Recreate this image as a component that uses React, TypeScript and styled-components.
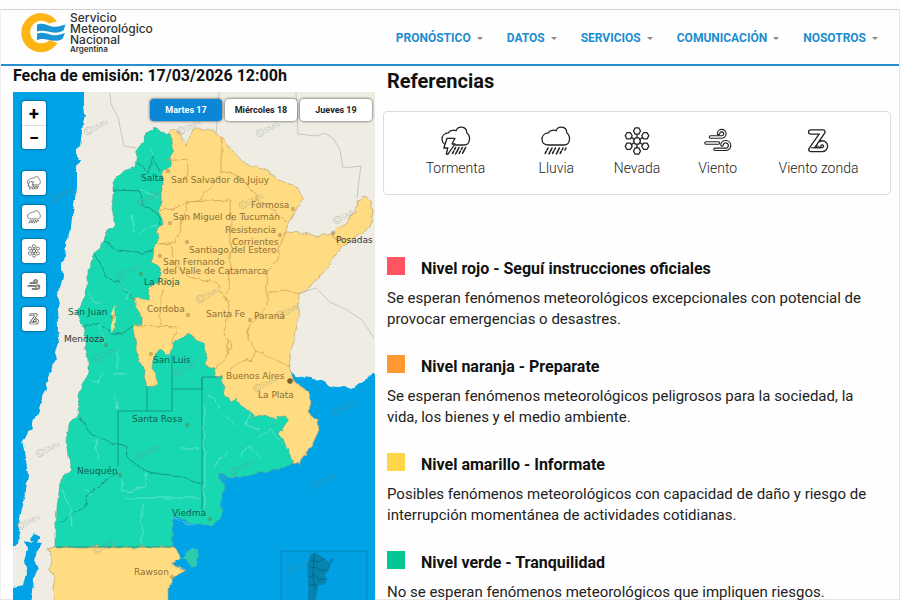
import React from "react";
import styled, { createGlobalStyle, css } from "styled-components";

const GlobalStyle = createGlobalStyle`
  *, *::before, *::after { box-sizing: border-box; }
  body {
    margin: 0;
    background: #fdfdfd;
    color: #111;
    font-family: Roboto, "Liberation Sans", sans-serif;
  }
  h1, h2, h3, p, ul { margin: 0; padding: 0; }
  ul { list-style: none; }
  button { font: inherit; cursor: pointer; }
`;

const Page = styled.div`
  display: flex;
  flex-direction: column;
  height: 100vh;
  overflow: hidden;
  padding-top: 9px;
`;

const Shell = styled.div`
  flex: 1;
  min-height: 0;
  border: 1px solid #e6e6e6;
  border-top-color: #d2d2d2;
  border-left-color: #f0f0f0;
  background: #fefefe;
`;

const Header = styled.header`
  display: flex;
  justify-content: space-between;
  align-items: center;
  height: 56px;
  padding: 0 21px 0 19px;
  border-bottom: 2px solid #2590d2;
`;

const Brand = styled.a`
  display: flex;
  gap: 3px;
  align-self: flex-start;
  padding-top: 2px;
  color: #333;
  text-decoration: none;
`;

const BrandName = styled.span`
  display: flex;
  flex-direction: column;
  font: 500 12px/11px Inter, "Liberation Sans", sans-serif;
`;

const BrandCountry = styled.span`
  font-size: 8px;
  line-height: 9px;
  font-weight: 600;
`;

const Nav = styled.nav`
  display: flex;
  gap: 24px;
`;

const NavButton = styled.button`
  display: flex;
  align-items: center;
  gap: 6px;
  padding: 2px 0 0;
  border: 0;
  background: none;
  color: #1b8dcf;
  font-size: 12px;
  font-weight: 700;
  line-height: 18px;
`;

const Caret = styled.span`
  border: 3px solid transparent;
  border-top-color: #888;
  border-bottom: 0;
`;

const Main = styled.main`
  display: grid;
  grid-template-columns: 362fr 508fr;
  gap: 8px;
  padding: 0 8px 0 12px;
`;

const Issued = styled.h1`
  height: 26px;
  font-size: 16px;
  font-weight: 700;
  line-height: 20px;
`;

const MapFrame = styled.div`
  position: relative;
`;

const MapSvg = styled.svg`
  display: block;
  width: 100%;
  height: auto;
`;

const CityText = styled.text<{ $tone: keyof typeof cityTones }>`
  font: 9px "DejaVu Sans", sans-serif;
  fill: ${(p) => cityTones[p.$tone]};
`;

const WatermarkText = styled.text`
  font: 8px "Liberation Sans", sans-serif;
`;

const MapTools = styled.div`
  position: absolute;
  top: 9px;
  left: 9px;
  display: flex;
  flex-direction: column;
  gap: 22px;
`;

const ZoomGroup = styled.div`
  display: flex;
  flex-direction: column;
  border-radius: 3px;
  background: #fff;
  box-shadow: 0 0 2px 1px rgba(0, 40, 80, 0.4);
`;

const ZoomButton = styled.button`
  width: 24px;
  height: 24px;
  padding: 0;
  border: 0;
  border-top: 1px solid #ddd;
  background: none;
  color: #000;
  font-size: 18px;
  font-weight: 700;
  line-height: 22px;
  &:first-child { border-top-color: transparent; }
`;

const LayerList = styled.div`
  display: flex;
  flex-direction: column;
  gap: 10px;
`;

const LayerButton = styled.button`
  display: grid;
  place-items: center;
  width: 24px;
  height: 24px;
  padding: 0;
  border: 0;
  border-radius: 3px;
  background: #fff;
  box-shadow: 0 0 2px 1px rgba(0, 40, 80, 0.4);
  color: #333;
`;

const DayTabs = styled.div`
  position: absolute;
  top: 7px;
  right: 3px;
  display: flex;
  gap: 3px;
`;

const DayTab = styled.button<{ $active?: boolean }>`
  width: 72px;
  height: 22px;
  padding: 0;
  border: 0;
  border-radius: 4px;
  background: #fff;
  box-shadow: 0 0 2px 1px rgba(60, 60, 60, 0.5);
  color: #222;
  font-size: 9px;
  font-weight: 700;
  line-height: 22px;
  ${(p) => p.$active && css`
    background: #0b87d8;
    color: #fff;
  `}
`;

const Title = styled.h2`
  padding-left: 4px;
  margin-bottom: 15px;
  font-size: 20px;
  font-weight: 700;
  line-height: 30px;
`;

const PhenomenaCard = styled.ul`
  display: grid;
  grid-template-columns: 3fr 2fr 2fr 2fr 3fr;
  height: 84px;
  padding: 14px 11px;
  border: 1px solid #dcdcdc;
  border-radius: 4px;
  background: #fff;
`;

const Phenomenon = styled.li`
  display: flex;
  flex-direction: column;
  align-items: center;
  gap: 2px;
  color: #222;
  font-size: 14px;
  font-weight: 300;
  line-height: 20px;
`;

const Levels = styled.ul`
  display: flex;
  flex-direction: column;
  gap: 25px;
  padding: 62px 20px 0 4px;
`;

const LevelHead = styled.div`
  display: flex;
  gap: 16px;
  height: 31px;
`;

const Swatch = styled.span<{ $color: string }>`
  width: 18px;
  height: 18px;
  background: ${(p) => p.$color};
`;

const LevelTitle = styled.h3`
  font-size: 16px;
  font-weight: 700;
  line-height: 24px;
`;

const LevelText = styled.p`
  color: #222;
  font-size: 15px;
  line-height: 21px;
`;

const cityTones = {
  amber: "#8f7032",
  green: "#12604f",
  dark: "#333",
};

type IconProps = { size: number };

const Glyph = ({ size, children }: IconProps & { children: React.ReactNode }) => (
  <svg width={size} height={size} viewBox="0 0 30 30" fill="none" stroke="currentColor"
    strokeWidth="1.3" strokeLinecap="round" strokeLinejoin="round" aria-hidden="true">
    {children}
  </svg>
);

const StormIcon = ({ size }: IconProps) => (
  <Glyph size={size}>
    <path d="M3.4 18C1.8 16.8 1 15.2 1 13.2C1 9.4 4 7 7.5 6.8C8.3 5 10 4.2 12 4.3C13.2 3.9 14 4.2 15 4.8C16 2.4 18 1 20.5 1.2C24 1.5 25.8 4 25.8 7C28 8.5 28.7 11 28.5 13.5C28.2 17 26 19 23 19H14.5" />
    <path d="M6 12.3H14L11 18H14L6.8 28.3L5.3 28L6.8 22H2.8Z" />
    <path d="M14.6 21.5L13.6 23.4M12.8 25L11.6 27.4M18 21.5L14.6 28M21.4 21.5L20.4 23.4M19.4 25L18.2 27.4M24.6 21.5L21.6 27.2" strokeWidth="1.6" />
  </Glyph>
);

const RainIcon = ({ size }: IconProps) => (
  <Glyph size={size}>
    <path d="M7.5 19C3.5 19 1 16.8 1 13.2C1 9.4 4 7 7.5 6.8C8.3 5 10 4.2 12 4.3C13.2 3.9 14 4.2 15 4.8C16 2.4 18 1 20.5 1.2C24 1.5 25.8 4 25.8 7C28 8.5 28.7 11 28.5 13.5C28.2 17 26 19 23 19Z" />
    <path d="M7 22L6 24M5.2 25.4L4.2 27.4M11 22L8 27.8M14.4 22L13.4 24M12.6 25.4L11.6 27.4M18.4 22L15.4 27.8M22 22L21 24M20.2 25.4L19.2 27.4M25 22L24 24" strokeWidth="1.6" />
  </Glyph>
);

const snowCells = [[15, 15], [15, 5], [15, 25], [6.7, 9.8], [23.3, 9.8], [6.7, 20.2], [23.3, 20.2]];

const SnowIcon = ({ size }: IconProps) => (
  <Glyph size={size}>
    <path d="M15 8.4V11.6M15 18.4V21.6M9.7 11.6L12 13.2M20.3 11.6L18 13.2M9.7 18.4L12 16.8M20.3 18.4L18 16.8" />
    {snowCells.map(([x, y]) => (
      <path key={`${x}-${y}`} d={`M${x - 1.8} ${y - 3.1}h3.6l1.7 3.1l-1.7 3.1h-3.6l-1.7-3.1z`} />
    ))}
  </Glyph>
);

const windTubes = "M7.5 11H18.5a3.2 3.2 0 1 0-3-3.6M3 17H15.5M12 23.3H22.6a3.8 3.8 0 1 0-3.6-4.4";

const WindIcon = ({ size }: IconProps) => (
  <Glyph size={size}>
    <path d={windTubes} strokeWidth="3.6" />
    <path d={windTubes} stroke="#fff" strokeWidth="1.3" />
  </Glyph>
);

const zondaTube = "M7.6 6H20L7.8 23.6H19.2a3.4 3.4 0 1 0-3.4-3.2";

const ZondaIcon = ({ size }: IconProps) => (
  <Glyph size={size}>
    <path d={zondaTube} strokeWidth="5.4" />
    <path d={zondaTube} stroke="#fff" strokeWidth="2.8" />
    <path d="M15.8 20.4a1.6 1.6 0 0 0 1.6 1.4H8.4" strokeWidth="1.1" />
  </Glyph>
);

const LogoMark = () => (
  <svg width="47" height="42" viewBox="0 0 47 42" aria-hidden="true">
    <path d="M37 9.5A19.6 19.6 0 1 0 37.5 31L29.5 28A11.3 11.3 0 1 1 29 11.5Z" fill="#fdb515" />
    <path d="M17 12.5C23 10.5 27 13.5 32 14.5C37 15.2 41 14 45.5 12.5L43.5 18.5C38 21.5 33 21 28 19.5C23 18.2 20 18.5 17 19.5Z" fill="#1a94d2" />
    <path d="M17 21.5C23 19.5 27 22 32 23C37 23.7 41 22.5 45 21L42.5 27C38 29.5 33 29 28 27.8C23 26.6 20 27 17 28.2Z" fill="#1a94d2" />
  </svg>
);

const phenomena = [
  { name: "Tormenta", Icon: StormIcon },
  { name: "Lluvia", Icon: RainIcon },
  { name: "Nevada", Icon: SnowIcon },
  { name: "Viento", Icon: WindIcon },
  { name: "Viento zonda", Icon: ZondaIcon },
];

const levels = [
  { color: "#ff5563", title: "Nivel rojo - Seguí instrucciones oficiales", text: "Se esperan fenómenos meteorológicos excepcionales con potencial de provocar emergencias o desastres." },
  { color: "#ff9833", title: "Nivel naranja - Preparate", text: "Se esperan fenómenos meteorológicos peligrosos para la sociedad, la vida, los bienes y el medio ambiente." },
  { color: "#ffd54a", title: "Nivel amarillo - Informate", text: "Posibles fenómenos meteorológicos con capacidad de daño y riesgo de interrupción momentánea de actividades cotidianas." },
  { color: "#03c694", title: "Nivel verde - Tranquilidad", text: "No se esperan fenómenos meteorológicos que impliquen riesgos." },
];

type City = [string, number, number, keyof typeof cityTones];

const cities: City[] = [
  ["Salta", 141, 181, "green"],
  ["San Salvador de Jujuy", 171, 183, "amber"],
  ["Formosa", 251, 208, "amber"],
  ["San Miguel de Tucumán", 173, 220, "amber"],
  ["Resistencia", 225, 233, "amber"],
  ["Corrientes", 232, 245, "amber"],
  ["Santiago del Estero", 189, 253, "amber"],
  ["Posadas", 336, 243, "dark"],
  ["San Fernando", 163, 265, "amber"],
  ["del Valle de Catamarca", 163, 274, "amber"],
  ["La Rioja", 144, 285, "green"],
  ["Cordoba", 147, 312, "amber"],
  ["San Juan", 68, 315, "green"],
  ["Santa Fe", 206, 317, "amber"],
  ["Paraná", 254, 319, "amber"],
  ["Mendoza", 64, 342, "dark"],
  ["San Luis", 153, 363, "green"],
  ["Buenos Aires", 226, 379, "amber"],
  ["La Plata", 258, 398, "amber"],
  ["Santa Rosa", 132, 422, "green"],
  ["Neuquén", 77, 474, "green"],
  ["Viedma", 172, 516, "green"],
  ["Rawson", 134, 575, "amber"],
];

const watermarks = [
  [88, 131], [260, 133], [181, 131], [243, 205], [337, 220], [200, 299], [142, 202],
  [121, 275], [280, 315], [97, 358], [177, 373], [257, 388], [140, 456], [40, 453],
  [20, 526], [97, 550], [234, 471], [316, 485], [336, 412], [53, 199], [292, 570],
];

const landPath = "M84 78L84 103L85 114L82 130L80 148L77 150L77 158L79 160L77 172L77 187L74 205L72 218L70 235L66 243L65 256L61 262L63 275L61 285L57 292L60 302L57 312L58 325L60 338L58 345L55 358L52 370L48 380L45 392L40 402L38 410L34 420L32 428L26 436L23 440L25 450L26 460L28 475L26 490L23 500L20 512L18 525L21 538L15 547L3 550V612H60L150 480L250 400L290 370L297 375L305 379L312 377L318 380L328 384L335 388L345 386L350 389L358 385L366 380L372 374L387 368V78Z";
const yellowPath = "M170 131L177 130L182 137L186 146L192 129H213L221 138L230 148L243 162L252 166L267 170L280 180L297 188L304 197L297 207L293 215L288 223L286 232L303 233L320 237L333 232L347 222L355 212L357 200L365 197L371 202L373 213L370 227L362 233L347 243L337 253L327 268L312 285L299 295L298 317L295 337L289 357L290 370L297 383L308 392L311 402L309 412L318 420L319 430L313 443L306 455L300 463L293 465L275 440L220 410L157 385L147 386L144 378L145 370L139 360L135 340L132 325L133 297L150 280L150 250L155 200L160 150Z";
const greenPath = "M153 127L160 131L170 133L171 140L173 152L170 157L172 166L165 170L162 168L163 177L163 185L161 193L161 205L159 213L163 223L157 233L158 240L154 250L152 262L160 268L162 277L159 283L150 286L149 300L133 297L137 308L143 317V324L132 325L135 340L139 360L145 370L144 378L147 386L157 385V373L152 370L153 358L160 347L167 354L170 353L173 345L182 338L190 333L193 338L203 342L207 353L205 365L216 368L213 377H222L223 390L230 402L236 399L242 407L250 410L255 418L265 414L275 419L283 416L288 420L283 428L279 435L285 443L290 455L293 464L280 468L263 472L247 476L230 477L220 473L221 480L224 490L222 500L223 512L218 520L212 525H200L190 523L180 518L173 517L172 527L173 540L172 547H55V525L56 507L58 493L63 477L71 470L68 457L66 440L68 425L78 415L79 395L83 383L89 373V360L86 350V340L83 327L77 313L83 300L88 287V270L95 253L103 243L108 230L116 225L112 210L113 193V182L125 170L135 167L137 150L145 135Z";
const southPath = "M49 549L55 547H172L175 550L180 557L172 563L186 570L175 577L168 588V612H55L53 587L55 577L50 567L51 557Z";

const WarningMap = () => (
  <MapSvg viewBox="13 92 362 508" role="img" aria-label="Mapa de alertas">
    <defs>
      <filter id="coast" x="0" y="70" width="400" height="550" filterUnits="userSpaceOnUse" colorInterpolationFilters="sRGB">
        <feTurbulence type="fractalNoise" baseFrequency="0.11" numOctaves="2" seed="4" />
        <feDisplacementMap in="SourceGraphic" scale="6" xChannelSelector="R" yChannelSelector="G" />
      </filter>
    </defs>
    <rect x="13" y="92" width="362" height="508" fill="#00a4e6" />
    <g filter="url(#coast)" strokeLinejoin="round">
      <path d={landPath} fill="#efede3" />
      <path d="M25 540L35 542L42 543L37 552L34 560L38 568L34 578L33 590L30 612H3V589L24 585L27 572L24 560L27 550ZM35 533L40 539L36 543L31 538Z" fill="#00a4e6" />
      <path d="M3 548L20 545L26 552L22 562L27 574L20 578L13 576L3 578Z" fill="#efede3" />
      <path d={yellowPath} fill="#ffdb82" stroke="#b9a878" strokeWidth="0.7" />
      <path d={greenPath} fill="#17d8b1" stroke="#5aa993" strokeWidth="0.6" />
      <path d="M115 304L116 318L115 328L110 333L112 323L111 312Z" fill="#ffdb82" />
      <path d="M219 473L226 476L228 480L223 482ZM221 503L224 507L221 511Z" fill="#1aa7d2" />
      <path d="M180 557L185 557L188 550L197 548L198 557L197 565L190 567L187 559Z" fill="#2fc9ad" />
      <path d={southPath} fill="#ffdb82" stroke="#b9a878" strokeWidth="0.7" />
    </g>
    <g fill="none" stroke="#bfbcb1" strokeWidth="0.8">
      <path d="M110 93L111 104L118 117L121 132L124 146L136 148" />
      <path d="M219 92L216 135M296 92L298 134L316 136L325 133L333 138L340 150L343 168L361 166L359 180L357 198M299 293L316 288L330 302L347 310L362 320L374 338" />
    </g>
    <g fill="none" stroke="#cfa558" strokeWidth="0.8" filter="url(#coast)">
      <path d="M221 138V171L201 200L187 203L184 215L176 243L160 244M221 171L240 176L260 200L287 222M187 202L231 200V230L229 290L227 293M165 160L187 158L188 172L183 180M158 210L174 209L187 203M158 244L170 243L174 262L188 276L214 282L225 293L229 310L224 330L229 355M167 277L160 300L160 326L176 327L173 344M160 326L133 325M267 293L285 290L299 295M267 293V306L250 325L249 339M267 293L266 272L276 262L280 245L286 232M216 370L231 348L229 340M229 371L245 359L252 361L256 350L280 362L290 367M249 325V340L256 350M332 233L340 246" />
    </g>
    <g fill="none" stroke="#14957a" strokeWidth="0.9">
      <path filter="url(#coast)" d="M137 163L145 170L149 173L153 157L160 172M113 190L141 191L142 205L158 215L160 225M104 241L118 250L147 253L153 250M96 254L106 277L118 281L126 292L136 300M83 327L98 322L110 333L122 334L132 327M80 417L91 434L110 442L126 446L127 458L145 470L160 474L182 476L202 484M118 473L104 482L88 495L85 508L70 515L61 524" />
      <path d="M147 386V411M172 355V411H118V466M172 389H202V377H222M202 377V510M56 547H172" />
    </g>
    <g fill="none" stroke="#a5eedd" strokeWidth="0.7" opacity="0.7" filter="url(#coast)">
      <path d="M151 150L153 157M141 190L158 198M140 235L147 228L156 225M131 215L134 231M89 295L94 301L102 303M119 283L130 294L126 300M98 322L104 346M113 373L126 374M117 350V370M90 380L98 383L104 373M114 395L118 409M96 440L98 459M62 490L70 505L72 527M123 478V492L146 487V472M125 498H200M142 504V546M180 449H200M204 405V510M85 490L92 496M224 415L236 426M250 410L246 425L260 430M258 438L270 428L282 445M240 455L250 445L260 458M215 465L228 452M172 518L195 526M209 395L221 407" />
    </g>
    <g fill="none" stroke="#7a8a83" strokeOpacity="0.32" strokeWidth="0.9">
      {watermarks.map(([x, y]) => (
        <g key={`${x}-${y}`} transform={`translate(${x} ${y}) rotate(-27)`}>
          <circle r="3.6" />
          <path d="M1.5 -1.2A1.8 1.8 0 1 0 1.5 1.4" />
          <WatermarkText x="4" y="3" fill="#7a8a83" fillOpacity="0.35" stroke="none">SMN</WatermarkText>
        </g>
      ))}
    </g>
    <g fill="#775e30" fillOpacity="0.35">
      {[[168, 171], [170, 223], [187, 242], [160, 256], [141, 274], [188, 315], [250, 320], [280, 235], [293, 209], [333, 233], [106, 345], [151, 354], [187, 425], [120, 475], [210, 519], [172, 577], [113, 317]].map(([x, y]) => (
        <circle key={`${x}-${y}`} cx={x} cy={y} r="2.2" />
      ))}
      <circle cx="290" cy="381" r="2.8" fillOpacity="1" />
    </g>
    {cities.map(([name, x, y, tone]) => (
      <CityText key={name} x={x} y={y} $tone={tone}>{name}</CityText>
    ))}
    <g stroke="#067fb4" strokeWidth="0.8">
      <rect x="281" y="551" width="86" height="60" fill="#0099da" fillOpacity="0.3" />
      <path d="M311 554L316 553L320 556L325 559L330 565L328 571L324 575L327 579L325 584L318 585L317 592L314 602H308L309 590L308 575L308 564Z" fill="#0784ad" />
      <path d="M311 560L318 562L323 559M309 568L316 567L321 571L327 569M309 577L315 575L319 580L325 579M309 585L318 585M314 554L313 575L315 590M329 563L333 561" fill="none" stroke="#045f85" />
      <path d="M328 565L333 559" strokeWidth="2" fill="none" />
    </g>
  </MapSvg>
);

export default function App() {
  return (
    <Page>
      <GlobalStyle />
      <Shell>
        <Header>
          <Brand href="#inicio">
            <LogoMark />
            <BrandName>
              <span>Servicio</span>
              <span>Meteorológico</span>
              <span>Nacional</span>
              <BrandCountry>Argentina</BrandCountry>
            </BrandName>
          </Brand>
          <Nav aria-label="Principal">
            {["PRONÓSTICO", "DATOS", "SERVICIOS", "COMUNICACIÓN", "NOSOTROS"].map((label) => (
              <NavButton key={label} type="button" aria-haspopup="menu">
                {label}
                <Caret />
              </NavButton>
            ))}
          </Nav>
        </Header>
        <Main>
          <section>
            <Issued>Fecha de emisión: 17/03/2026 12:00h</Issued>
            <MapFrame>
              <WarningMap />
              <MapTools>
                <ZoomGroup>
                  <ZoomButton type="button" aria-label="Acercar">+</ZoomButton>
                  <ZoomButton type="button" aria-label="Alejar">−</ZoomButton>
                </ZoomGroup>
                <LayerList>
                  {phenomena.map(({ name, Icon }) => (
                    <LayerButton key={name} type="button" aria-label={name}>
                      <Icon size={14} />
                    </LayerButton>
                  ))}
                </LayerList>
              </MapTools>
              <DayTabs>
                <DayTab type="button" $active aria-pressed="true">Martes 17</DayTab>
                <DayTab type="button" aria-pressed="false">Miércoles 18</DayTab>
                <DayTab type="button" aria-pressed="false">Jueves 19</DayTab>
              </DayTabs>
            </MapFrame>
          </section>
          <section>
            <Title>Referencias</Title>
            <PhenomenaCard>
              {phenomena.map(({ name, Icon }) => (
                <Phenomenon key={name}>
                  <Icon size={30} />
                  {name}
                </Phenomenon>
              ))}
            </PhenomenaCard>
            <Levels>
              {levels.map(({ color, title, text }) => (
                <li key={title}>
                  <LevelHead>
                    <Swatch $color={color} />
                    <LevelTitle>{title}</LevelTitle>
                  </LevelHead>
                  <LevelText>{text}</LevelText>
                </li>
              ))}
            </Levels>
          </section>
        </Main>
      </Shell>
    </Page>
  );
}
